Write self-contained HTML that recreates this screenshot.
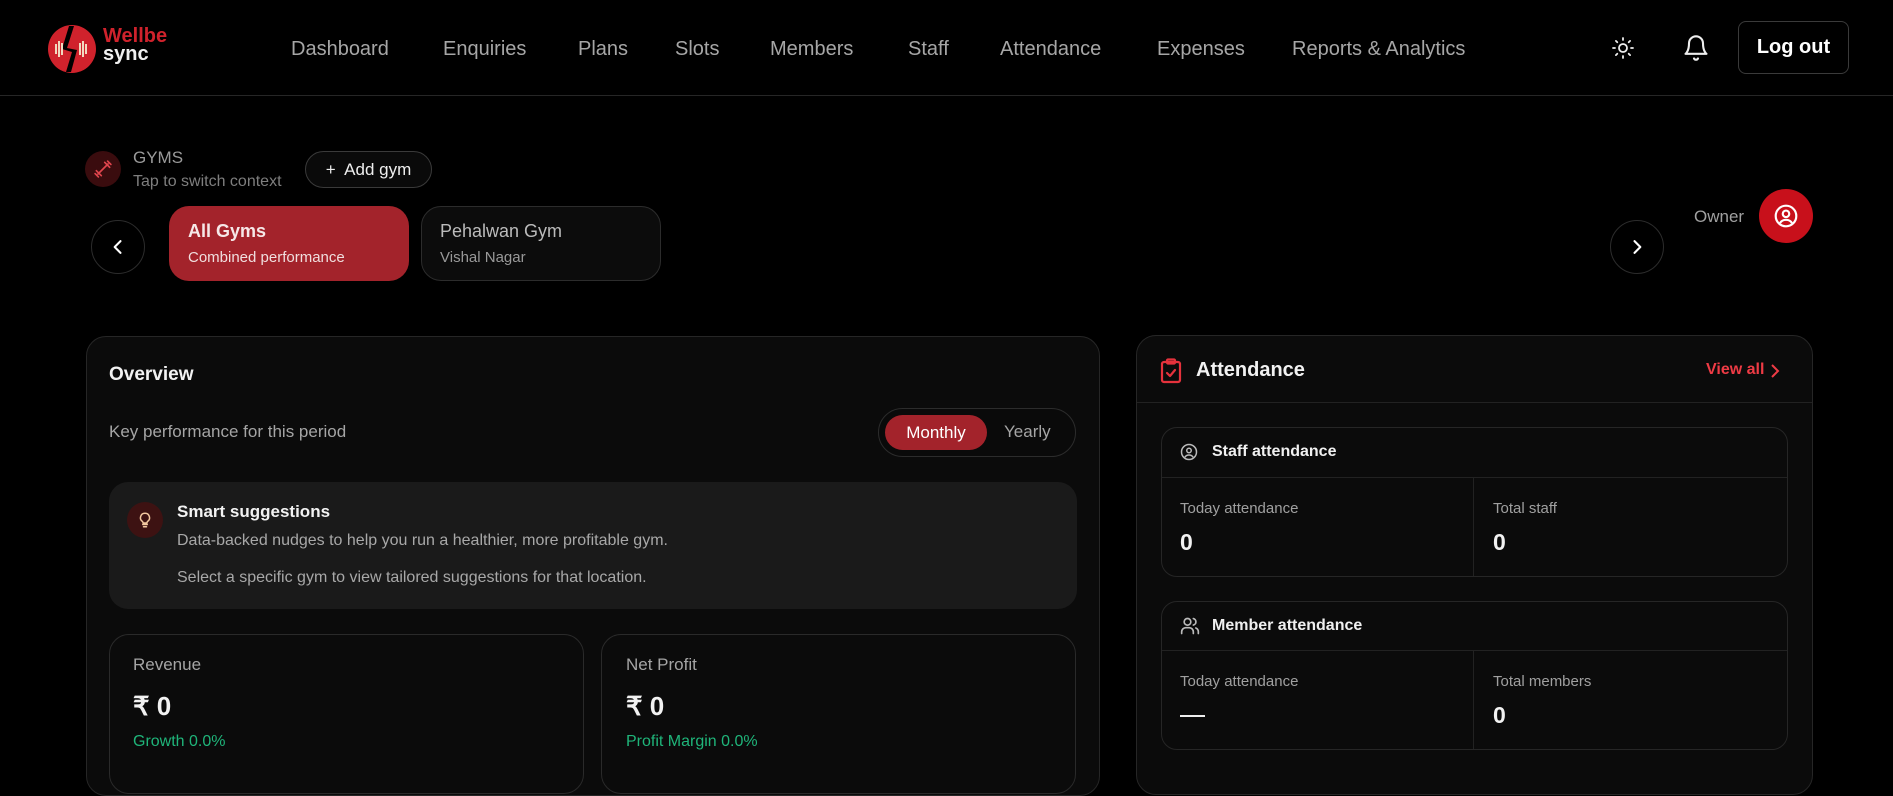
<!DOCTYPE html>
<html><head><meta charset="utf-8"><style>
*{box-sizing:border-box;margin:0;padding:0}
body{width:1893px;height:771px;background:#000;overflow:hidden;position:relative;font-family:"Liberation Sans",sans-serif;color:#eee}
.a{position:absolute;white-space:nowrap}
.nav{top:38px;font-size:20px;color:#a6a6a6}
.card{position:absolute;background:#0b0b0b;border:1px solid #262626;border-radius:20px}
.circ{position:absolute;border:1px solid #2c2c2c;border-radius:50%;display:flex;align-items:center;justify-content:center}
.lbl{font-size:15px;color:#a0a0a0}
.num{font-size:23px;font-weight:bold;color:#f2f2f2}
</style></head><body>
<div class="a" style="left:0;top:95px;width:1893px;height:1px;background:#262626"></div>
<!-- logo -->
<svg class="a" style="left:47px;top:24px" width="50" height="50" viewBox="0 0 50 50">
<circle cx="25" cy="25" r="24" fill="#d0222c"/>
<path d="M22 2 L27 2 L20 24 L30 26 L24 48 L19 48 L25 28 L15 25 Z" fill="#000"/>
<rect x="8" y="20" width="2" height="10" fill="#f2d9c0"/><rect x="11" y="17" width="2" height="16" fill="#f2d9c0"/><rect x="14" y="19" width="2" height="12" fill="#f2d9c0"/>
<rect x="32" y="19" width="2" height="12" fill="#f2d9c0"/><rect x="35" y="17" width="2" height="16" fill="#f2d9c0"/><rect x="38" y="20" width="2" height="10" fill="#f2d9c0"/>
</svg>
<div class="a" style="left:103px;top:26px;font-size:20px;font-weight:bold;color:#d0222c;line-height:20px">Wellbe</div>
<div class="a" style="left:103px;top:44px;font-size:20px;font-weight:bold;color:#f0f0f0;line-height:20px">sync</div>
<div class="a nav" style="left:291px">Dashboard</div>
<div class="a nav" style="left:443px">Enquiries</div>
<div class="a nav" style="left:578px">Plans</div>
<div class="a nav" style="left:675px">Slots</div>
<div class="a nav" style="left:770px">Members</div>
<div class="a nav" style="left:908px">Staff</div>
<div class="a nav" style="left:1000px">Attendance</div>
<div class="a nav" style="left:1157px">Expenses</div>
<div class="a nav" style="left:1292px">Reports &amp; Analytics</div>
<svg class="a" style="left:1611px;top:36px" width="24" height="24" viewBox="0 0 24 24" fill="none" stroke="#eee" stroke-width="1.8" stroke-linecap="round"><circle cx="12" cy="12" r="4"/><path d="M12 2v2M12 20v2M4.9 4.9l1.4 1.4M17.7 17.7l1.4 1.4M2 12h2M20 12h2M4.9 19.1l1.4-1.4M17.7 6.3l1.4-1.4"/></svg>
<svg class="a" style="left:1682px;top:34px" width="28" height="28" viewBox="0 0 24 24" fill="none" stroke="#eee" stroke-width="1.8" stroke-linecap="round" stroke-linejoin="round"><path d="M6 8a6 6 0 0 1 12 0c0 7 3 9 3 9H3s3-2 3-9"/><path d="M10.3 21a1.9 1.9 0 0 0 3.4 0"/></svg>
<div class="a" style="left:1738px;top:21px;width:111px;height:53px;border:1px solid #3a3a3a;border-radius:8px;font-size:20px;font-weight:bold;color:#fff;display:flex;align-items:center;justify-content:center">Log out</div>

<!-- gyms -->
<div class="a" style="left:85px;top:151px;width:36px;height:36px;border-radius:50%;background:#3a0c0e"></div>
<svg class="a" style="left:93px;top:159px" width="20" height="20" viewBox="0 0 24 24" fill="none" stroke="#e0454d" stroke-width="2" stroke-linecap="round"><path d="M6 18l12-12M4 14l6 6M14 4l6 6M2.5 17.5l4 4M17.5 2.5l4 4"/></svg>
<div class="a" style="left:133px;top:148px;font-size:17px;color:#9a9a9a">GYMS</div>
<div class="a" style="left:133px;top:173px;font-size:16px;color:#7e7e7e">Tap to switch context</div>
<div class="a" style="left:305px;top:151px;width:127px;height:37px;border:1px solid #3a3a3a;border-radius:19px;background:#0a0a0a;font-size:17px;color:#eee;display:flex;align-items:center;justify-content:center">+&nbsp; Add gym</div>
<div class="circ" style="left:91px;top:220px;width:54px;height:54px"><svg width="20" height="20" viewBox="0 0 24 24" fill="none" stroke="#fff" stroke-width="2.5" stroke-linecap="round" stroke-linejoin="round"><path d="M15 5l-7 7 7 7"/></svg></div>
<div class="a" style="left:169px;top:206px;width:240px;height:75px;background:#a3232b;border-radius:20px"></div>
<div class="a" style="left:188px;top:221px;font-size:18px;font-weight:bold;color:#f6e8e8">All Gyms</div>
<div class="a" style="left:188px;top:249px;font-size:15px;color:#f0dede">Combined performance</div>
<div class="a" style="left:421px;top:206px;width:240px;height:75px;background:#0c0c0c;border:1px solid #2c2c2c;border-radius:20px"></div>
<div class="a" style="left:440px;top:221px;font-size:18px;color:#bbb">Pehalwan Gym</div>
<div class="a" style="left:440px;top:249px;font-size:15px;color:#999">Vishal Nagar</div>
<div class="circ" style="left:1610px;top:220px;width:54px;height:54px"><svg width="20" height="20" viewBox="0 0 24 24" fill="none" stroke="#fff" stroke-width="2.5" stroke-linecap="round" stroke-linejoin="round"><path d="M9 5l7 7-7 7"/></svg></div>
<div class="a" style="left:1694px;top:207px;font-size:17px;color:#a0a0a0">Owner</div>
<div class="a" style="left:1759px;top:189px;width:54px;height:54px;border-radius:50%;background:#c8101b;display:flex;align-items:center;justify-content:center"><svg width="26" height="26" viewBox="0 0 24 24" fill="none" stroke="#fff" stroke-width="2"><circle cx="12" cy="12" r="9.5"/><circle cx="12" cy="10" r="3"/><path d="M6.5 18.5c1.5-2.5 3.5-3 5.5-3s4 .5 5.5 3"/></svg></div>

<!-- overview -->
<div class="card" style="left:86px;top:336px;width:1014px;height:460px"></div>
<div class="a" style="left:109px;top:364px;font-size:19px;font-weight:bold;color:#f2f2f2">Overview</div>
<div class="a" style="left:109px;top:422px;font-size:17px;color:#a5a5a5">Key performance for this period</div>
<div class="a" style="left:878px;top:408px;width:198px;height:49px;border:1px solid #2c2c2c;border-radius:25px;background:#0a0a0a"></div>
<div class="a" style="left:885px;top:415px;width:102px;height:35px;border-radius:18px;background:#a3232b;font-size:17px;color:#fff;display:flex;align-items:center;justify-content:center">Monthly</div>
<div class="a" style="left:1004px;top:422px;font-size:17px;color:#a5a5a5">Yearly</div>
<div class="a" style="left:109px;top:482px;width:968px;height:127px;background:#1a1a1a;border-radius:19px"></div>
<div class="a" style="left:127px;top:502px;width:36px;height:36px;border-radius:50%;background:#3d1212;display:flex;align-items:center;justify-content:center"><svg width="18" height="18" viewBox="0 0 24 24" fill="none" stroke="#f3c8a0" stroke-width="2" stroke-linecap="round"><path d="M9 18h6M10 21h4M12 3a6 6 0 0 0-3.5 10.9c.6.5 1 1.2 1 2.1h5c0-.9.4-1.6 1-2.1A6 6 0 0 0 12 3z"/></svg></div>
<div class="a" style="left:177px;top:502px;font-size:17px;font-weight:bold;color:#f2f2f2">Smart suggestions</div>
<div class="a" style="left:177px;top:532px;font-size:16px;color:#a8a8a8">Data-backed nudges to help you run a healthier, more profitable gym.</div>
<div class="a" style="left:177px;top:569px;font-size:16px;color:#a8a8a8">Select a specific gym to view tailored suggestions for that location.</div>
<div class="card" style="left:109px;top:634px;width:475px;height:160px;background:#0b0b0b;border-color:#2a2a2a"></div>
<div class="card" style="left:601px;top:634px;width:475px;height:160px;background:#0b0b0b;border-color:#2a2a2a"></div>
<div class="a" style="left:133px;top:655px;font-size:17px;color:#a5a5a5">Revenue</div>
<div class="a" style="left:133px;top:691px;font-size:26px;font-weight:bold;color:#f2f2f2">₹ 0</div>
<div class="a" style="left:133px;top:733px;font-size:16px;color:#1fb57a">Growth 0.0%</div>
<div class="a" style="left:626px;top:655px;font-size:17px;color:#a5a5a5">Net Profit</div>
<div class="a" style="left:626px;top:691px;font-size:26px;font-weight:bold;color:#f2f2f2">₹ 0</div>
<div class="a" style="left:626px;top:733px;font-size:16px;color:#1fb57a">Profit Margin 0.0%</div>

<!-- attendance -->
<div class="card" style="left:1136px;top:335px;width:677px;height:460px"></div>
<div class="a" style="left:1137px;top:402px;width:675px;height:1px;background:#222"></div>
<svg class="a" style="left:1160px;top:358px" width="22" height="26" viewBox="0 0 22 26" fill="none" stroke="#e5323c" stroke-width="2.2" stroke-linejoin="round" stroke-linecap="round"><rect x="2" y="4" width="18" height="20" rx="2"/><rect x="7" y="1.5" width="8" height="4" rx="1"/><path d="M7 15l3 3 5-6"/></svg>
<div class="a" style="left:1196px;top:359px;font-size:20px;font-weight:bold;color:#f2f2f2">Attendance</div>
<div class="a" style="left:1706px;top:361px;font-size:16px;font-weight:bold;color:#ef3b45">View all</div>
<svg class="a" style="left:1769px;top:363px" width="12" height="16" viewBox="0 0 12 16" fill="none" stroke="#ef3b45" stroke-width="2"><path d="M3 2l6 6-6 6"/></svg>

<div class="card" style="left:1161px;top:427px;width:627px;height:150px;border-radius:16px"></div>
<div class="a" style="left:1162px;top:477px;width:625px;height:1px;background:#222"></div>
<div class="a" style="left:1473px;top:478px;width:1px;height:98px;background:#222"></div>
<svg class="a" style="left:1180px;top:443px" width="18" height="18" viewBox="0 0 24 24" fill="none" stroke="#bbb" stroke-width="2"><circle cx="12" cy="12" r="10"/><circle cx="12" cy="10" r="3"/><path d="M6.5 19c1.5-2.5 3.5-3 5.5-3s4 .5 5.5 3"/></svg>
<div class="a" style="left:1212px;top:443px;font-size:16px;font-weight:bold;color:#f0f0f0">Staff attendance</div>
<div class="a lbl" style="left:1180px;top:500px">Today attendance</div>
<div class="a num" style="left:1180px;top:529px">0</div>
<div class="a lbl" style="left:1493px;top:500px">Total staff</div>
<div class="a num" style="left:1493px;top:529px">0</div>

<div class="card" style="left:1161px;top:601px;width:627px;height:149px;border-radius:16px"></div>
<div class="a" style="left:1162px;top:650px;width:625px;height:1px;background:#222"></div>
<div class="a" style="left:1473px;top:651px;width:1px;height:98px;background:#222"></div>
<svg class="a" style="left:1180px;top:616px" width="20" height="20" viewBox="0 0 24 24" fill="none" stroke="#bbb" stroke-width="2" stroke-linecap="round"><circle cx="9" cy="7" r="4"/><path d="M2 21v-2a5 5 0 0 1 5-5h4a5 5 0 0 1 5 5v2M16 3.1a4 4 0 0 1 0 7.8M22 21v-2a5 5 0 0 0-3-4.6"/></svg>
<div class="a" style="left:1212px;top:617px;font-size:16px;font-weight:bold;color:#f0f0f0">Member attendance</div>
<div class="a lbl" style="left:1180px;top:673px">Today attendance</div>
<div class="a" style="left:1180px;top:715px;width:25px;height:2px;background:#eee"></div>
<div class="a lbl" style="left:1493px;top:673px">Total members</div>
<div class="a num" style="left:1493px;top:702px">0</div>
</body></html>
